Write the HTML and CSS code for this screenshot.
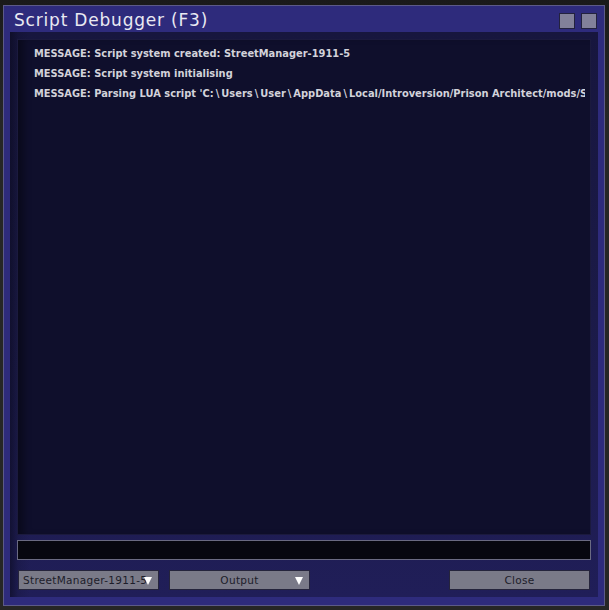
FILE: index.html
```html
<!DOCTYPE html>
<html>
<head>
<meta charset="utf-8">
<link rel="stylesheet" href="styles.css">
</head>
<body>
<div class="window">
  <div class="titlebar">
    <div class="title">Script Debugger (F3)</div>
    <div class="winbtns"><span class="winbtn"></span><span class="winbtn"></span></div>
  </div>
  <div class="frame">
    <div class="log">
      <div class="line">MESSAGE: Script system created: StreetManager-1911-5</div>
      <div class="line">MESSAGE: Script system initialising</div>
      <div class="line">MESSAGE: Parsing LUA script 'C:<span class="bs">\</span>Users<span class="bs">\</span>User<span class="bs">\</span>AppData<span class="bs">\</span>Local/Introversion/Prison Architect/mods/StreetManager/data/scripts/StreetManager.lua'</div>
    </div>
    <div class="input"></div>
    <div class="buttons">
      <div class="btn drop"><span class="label">StreetManager-1911-5</span><span class="arrow"></span></div>
      <div class="btn drop"><span class="label center">Output</span><span class="arrow"></span></div>
      <div class="spacer"></div>
      <div class="btn last"><span class="label center">Close</span></div>
    </div>
  </div>
</div>
</body>
</html>
```
FILE: styles.css
```css
html, body {
  margin: 0;
  padding: 0;
  background: #222222;
  width: 609px;
  height: 610px;
  overflow: hidden;
}
body {
  padding: 5px 0 0 3px;
  box-sizing: border-box;
  background: linear-gradient(to bottom, #1a1a1a 0px, #262626 120px, #262626 100%);
}
.window {
  box-sizing: border-box;
  width: 602px;
  height: 601px;
  border: 1px solid #5c5a88;
  background: #2e2b7c;
  display: flex;
  flex-direction: column;
}
.titlebar {
  height: 26px;
  display: flex;
  align-items: center;
  justify-content: space-between;
  padding: 0 7px 0 10px;
}
.title {
  font-family: "DejaVu Sans", sans-serif;
  font-size: 17px;
  letter-spacing: 0.8px;
  color: #e9e9f2;
  margin-top: 1px;
}
.winbtns {
  display: flex;
  gap: 6px;
  margin-top: 4px;
}
.winbtn {
  box-sizing: border-box;
  width: 16px;
  height: 16px;
  background: #82819a;
  border: 1px solid #23223e;
}
.frame {
  margin: 0 6px 0 6px;
  height: 565px;
  box-sizing: border-box;
  padding: 7px 7px 7px 7px;
  background:
    linear-gradient(to right, rgba(8,8,24,0.55) 0px, rgba(8,8,24,0.15) 8px, rgba(8,8,24,0) 20px),
    linear-gradient(to bottom, #17163e 0%, #1b1a48 50%, #201e58 100%);
  display: flex;
  flex-direction: column;
}
.log {
  height: 496px;
  box-sizing: border-box;
  background: #0f0f2c;
  border: 1px solid #1b1a3e;
  box-shadow: inset 9px 0 7px -3px rgba(0,0,0,0.35);
  padding: 4px 5px 0 16px;
  overflow: hidden;
}
.line {
  font-family: "DejaVu Sans", sans-serif;
  font-weight: bold;
  font-size: 9.9px;
  line-height: 20px;
  color: #d2d2da;
  white-space: nowrap;
  overflow: hidden;
}
.bs {
  padding: 0 2px;
}
.input {
  margin-top: 5px;
  height: 20px;
  box-sizing: border-box;
  background: #07070f;
  border: 1px solid #6a6a82;
}
.buttons {
  margin-top: 10px;
  display: flex;
  gap: 10px;
  padding-left: 1px;
}
.spacer { flex: 1; }
.btn {
  position: relative;
  box-sizing: border-box;
  width: 141px;
  height: 20px;
  background: #7a7a88;
  border: 1px solid #25243c;
  font-family: "DejaVu Sans", sans-serif;
  font-size: 10.5px;
  color: #1d1d2a;
  display: flex;
  align-items: center;
  overflow: hidden;
}
.btn.last {
  margin-right: 1px;
}
.label {
  white-space: nowrap;
  padding-left: 4px;
  letter-spacing: 0.3px;
}
.label.center {
  flex: 1;
  text-align: center;
  padding-left: 0;
}
.arrow {
  position: absolute;
  right: 6px;
  top: 6px;
  width: 0;
  height: 0;
  border-left: 4px solid transparent;
  border-right: 4px solid transparent;
  border-top: 8px solid #ffffff;
}
```
